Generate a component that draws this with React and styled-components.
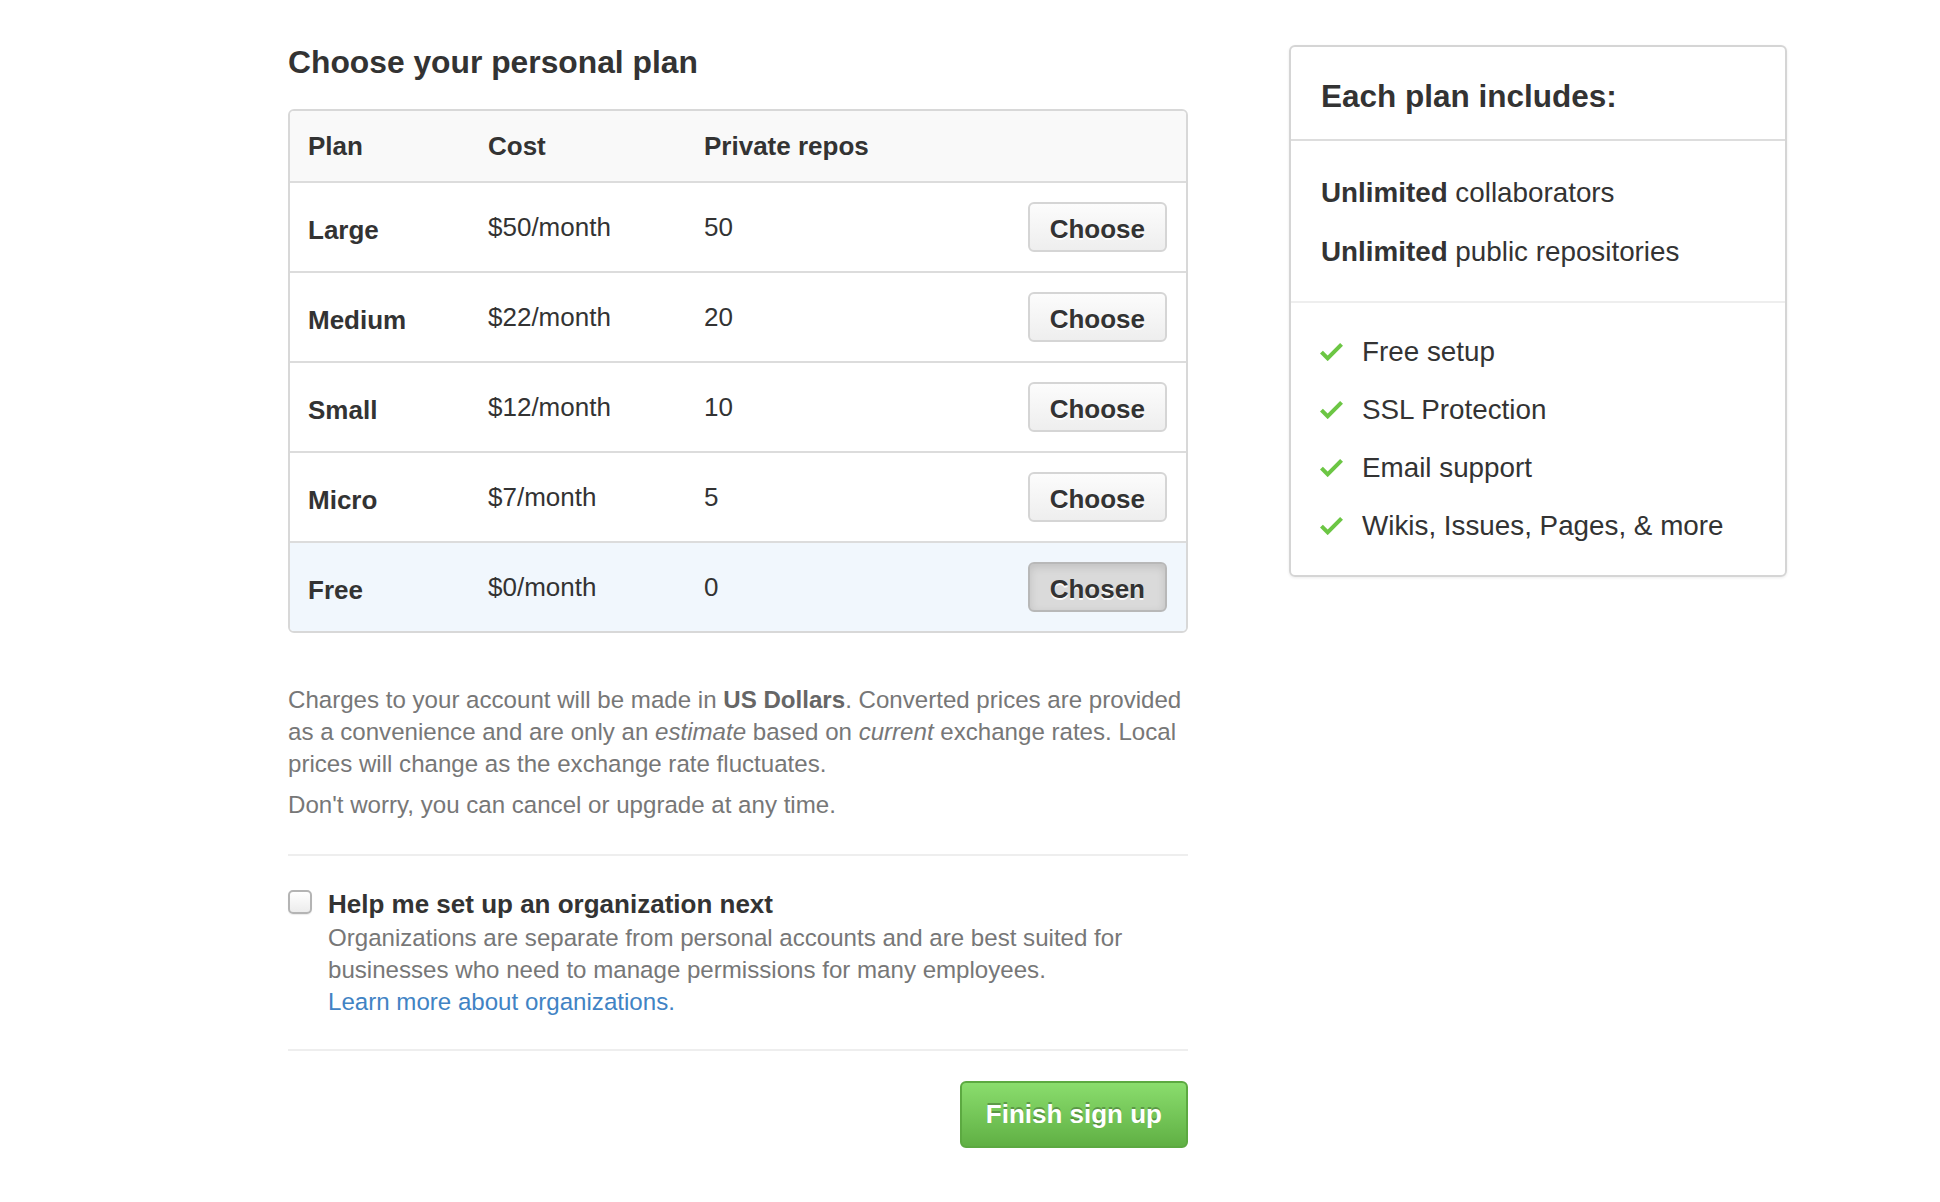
import React from "react";
import styled, { createGlobalStyle } from "styled-components";

const GlobalStyle = createGlobalStyle`
  html, body { margin: 0; padding: 0; background: #fff; }
  body {
    font-family: "Liberation Sans", Arial, Helvetica, sans-serif;
    color: #333;
  }
  * { box-sizing: border-box; }
`;

const Page = styled.div`
  display: flex;
  align-items: flex-start;
  gap: 101px;
  padding: 42px 0 0 288px;
  min-height: 1202px;
`;

const Main = styled.main`
  width: 900px;
  flex: none;
`;

const Title = styled.h2`
  margin: 0 0 27px;
  font-size: 31.8px;
  line-height: 40px;
  font-weight: bold;
  color: #333;
`;

const PlanTable = styled.div`
  border: 2px solid #d8d8d8;
  border-radius: 6px;
  overflow: hidden;
`;

const Row = styled.div`
  display: grid;
  grid-template-columns: 180px 216px 1fr auto;
  align-items: center;
  height: ${(p) => (p.$head ? 70 : 88)}px;
  box-sizing: content-box;
  padding: 0 19px 0 18px;
  background: ${(p) => (p.$head ? "#f9f9f9" : p.$active ? "#f1f7fd" : "#fff")};
  border-bottom: 2px solid #dcdcdc;
  &:last-child { border-bottom: none; }
`;

const Cell = styled.div`
  font-size: 26px;
  line-height: 32px;
  font-weight: ${(p) => (p.$bold ? "bold" : "normal")};
  color: #333;
  padding-top: ${(p) => (p.$name ? 5 : 0)}px;
  white-space: nowrap;
`;

const PlanButton = styled.button`
  height: 50px;
  padding: 4px 20px 0;
  font-family: "Liberation Sans", Arial, sans-serif;
  font-size: 26px;
  font-weight: bold;
  color: #333;
  border: 2px solid ${(p) => (p.$chosen ? "#b8b8b8" : "#d5d5d5")};
  border-radius: 6px;
  background: ${(p) =>
    p.$chosen ? "#dadada" : "linear-gradient(#fcfcfc, #eeeeee)"};
  box-shadow: ${(p) =>
    p.$chosen ? "inset 0 3px 8px rgba(0,0,0,0.12)" : "none"};
  text-shadow: 0 2px 0 rgba(255, 255, 255, 0.9);
  cursor: pointer;
`;

const Notes = styled.div`
  margin-top: 51px;
`;

const Note = styled.p`
  margin: 0;
  font-size: 24.1px;
  line-height: 32px;
  color: #777;
  & + & { margin-top: 9px; }
  strong { color: #666; }
`;

const Divider = styled.hr`
  border: 0;
  border-top: 2px solid #eeeeee;
  margin: ${(p) => p.$top || 0}px 0 0;
`;

const OrgOption = styled.label`
  display: flex;
  align-items: flex-start;
  gap: 16px;
  padding: 32px 0 31px;
`;

const Check = styled.input`
  appearance: none;
  flex: none;
  width: 24px;
  height: 24px;
  margin: 2px 0 0;
  border: 2px solid #b4b4b4;
  border-radius: 5px;
  background: linear-gradient(#ffffff, #ececec);
  box-shadow: 0 1px 1px rgba(0, 0, 0, 0.08);
`;

const OrgText = styled.div`
  display: flex;
  flex-direction: column;
  gap: 2px;
`;

const OrgTitle = styled.div`
  font-size: 26px;
  line-height: 32px;
  font-weight: bold;
  color: #333;
`;

const OrgDesc = styled.p`
  margin: 0;
  font-size: 24.1px;
  line-height: 32px;
  color: #777;
`;

const Link = styled.a`
  display: block;
  color: #4183c4;
  text-decoration: none;
`;

const FinishRow = styled.div`
  display: flex;
  justify-content: flex-end;
  padding-top: 30px;
`;

const FinishButton = styled.button`
  height: 67px;
  padding: 0 24px;
  font-family: "Liberation Sans", Arial, sans-serif;
  font-size: 26px;
  font-weight: bold;
  color: #fff;
  border: 2px solid #5ca941;
  border-radius: 6px;
  background: linear-gradient(#8add6d, #60b044);
  text-shadow: 0 -2px 0 rgba(0, 0, 0, 0.25);
  cursor: pointer;
`;

const Sidebar = styled.aside`
  width: 498px;
  flex: none;
  margin-top: 3px;
  border: 2px solid #d5d5d5;
  border-radius: 6px;
  box-shadow: 0 1px 3px rgba(0, 0, 0, 0.08);
`;

const SideHeader = styled.h3`
  margin: 0;
  padding: 29px 30px 23px;
  font-size: 31.5px;
  line-height: 40px;
  font-weight: bold;
  color: #333;
  border-bottom: 2px solid #dddddd;
`;

const SideList = styled.ul`
  list-style: none;
  margin: 0;
  padding: ${(p) => p.$pad};
  display: flex;
  flex-direction: column;
  gap: ${(p) => p.$gap}px;
  & + & { border-top: 2px solid #eeeeee; }
`;

const SideItem = styled.li`
  display: flex;
  align-items: center;
  gap: 19px;
  font-size: 27.8px;
  line-height: 42px;
  color: #333;
`;

const CheckIcon = () => (
  <svg width="23" height="18.2" viewBox="0 3.5 12 9.5" aria-hidden="true">
    <path d="M12 5l-8 8-4-4 1.5-1.5L4 10l6.5-6.5L12 5z" fill="#6cc644" />
  </svg>
);

const plans = [
  { name: "Large", cost: "$50/month", repos: "50" },
  { name: "Medium", cost: "$22/month", repos: "20" },
  { name: "Small", cost: "$12/month", repos: "10" },
  { name: "Micro", cost: "$7/month", repos: "5" },
  { name: "Free", cost: "$0/month", repos: "0", chosen: true },
];

const features = ["Free setup", "SSL Protection", "Email support", "Wikis, Issues, Pages, & more"];

export default function App() {
  return (
    <>
      <GlobalStyle />
      <Page>
        <Main>
          <Title>Choose your personal plan</Title>
          <PlanTable>
            <Row $head>
              <Cell $bold>Plan</Cell>
              <Cell $bold>Cost</Cell>
              <Cell $bold>Private repos</Cell>
              <div />
            </Row>
            {plans.map((p) => (
              <Row key={p.name} $active={p.chosen}>
                <Cell $bold $name>{p.name}</Cell>
                <Cell>{p.cost}</Cell>
                <Cell>{p.repos}</Cell>
                <PlanButton $chosen={p.chosen}>{p.chosen ? "Chosen" : "Choose"}</PlanButton>
              </Row>
            ))}
          </PlanTable>

          <Notes>
            <Note>
              Charges to your account will be made in <strong>US Dollars</strong>. Converted prices are provided
              as a convenience and are only an <em>estimate</em> based on <em>current</em> exchange rates. Local
              prices will change as the exchange rate fluctuates.
            </Note>
            <Note>Don't worry, you can cancel or upgrade at any time.</Note>
          </Notes>

          <Divider $top={33} />
          <OrgOption>
            <Check type="checkbox" />
            <OrgText>
              <OrgTitle>Help me set up an organization next</OrgTitle>
              <OrgDesc>
                Organizations are separate from personal accounts and are best suited for businesses who need to
                manage permissions for many employees.
                <Link href="#">Learn more about organizations.</Link>
              </OrgDesc>
            </OrgText>
          </OrgOption>
          <Divider />
          <FinishRow>
            <FinishButton>Finish sign up</FinishButton>
          </FinishRow>
        </Main>

        <Sidebar>
          <SideHeader>Each plan includes:</SideHeader>
          <SideList $pad="31px 30px 28px" $gap={17}>
            <SideItem>
              <span>
                <strong>Unlimited</strong> collaborators
              </span>
            </SideItem>
            <SideItem>
              <span>
                <strong>Unlimited</strong> public repositories
              </span>
            </SideItem>
          </SideList>
          <SideList $pad="28px 30px 28px 29px" $gap={16}>
            {features.map((f) => (
              <SideItem key={f}>
                <CheckIcon />
                <span>{f}</span>
              </SideItem>
            ))}
          </SideList>
        </Sidebar>
      </Page>
    </>
  );
}
